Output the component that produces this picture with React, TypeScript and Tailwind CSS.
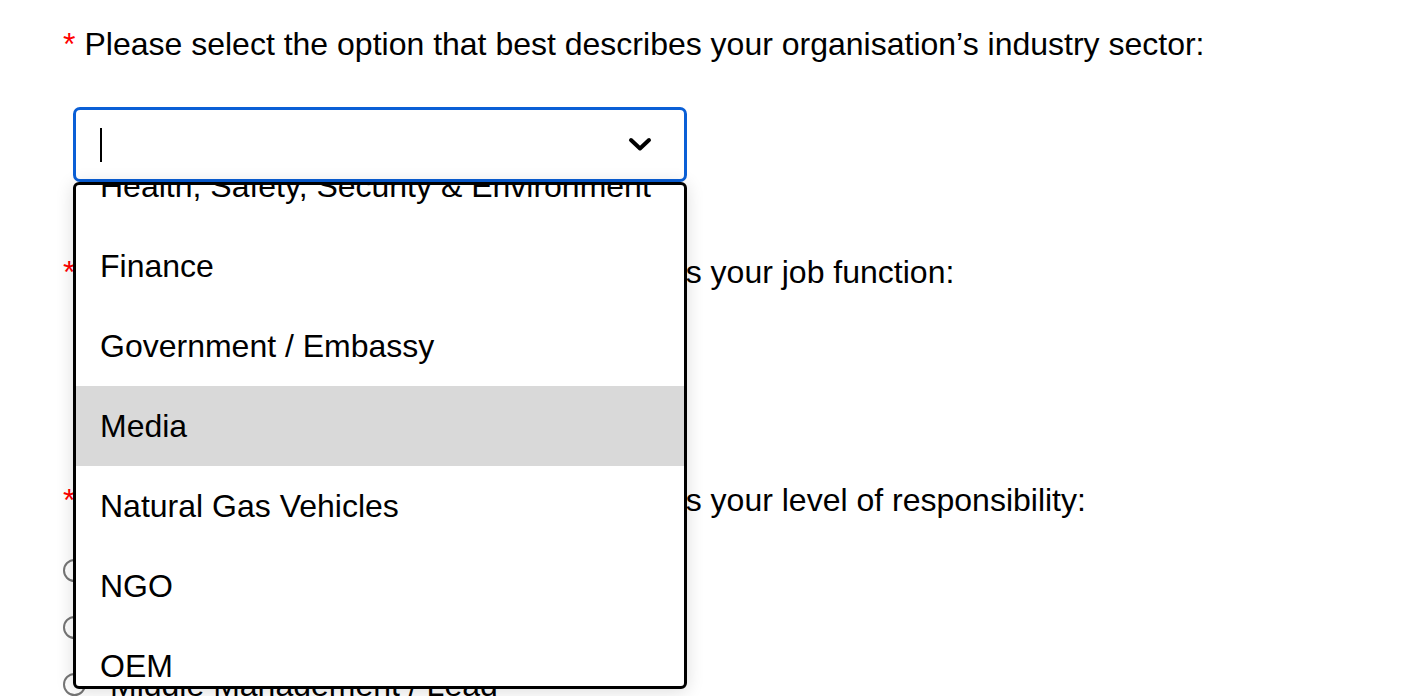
const sectors = [
  "Health, Safety, Security & Environment",
  "Finance",
  "Government / Embassy",
  "Media",
  "Natural Gas Vehicles",
  "NGO",
  "OEM",
  "Oil & Gas",
];

const levels = ["Senior Management / Director", "Manager", "Middle Management / Lead"];

const Chevron = () => (
  <svg width="24" height="15" viewBox="0 0 24 15" fill="none">
    <polyline points="3,3 12,11.5 21,3" stroke="#000" strokeWidth="4" strokeLinecap="round" strokeLinejoin="round" />
  </svg>
);

const Question = ({ text }: { text: string }) => (
  <p className="text-[32px] leading-[36px] text-black">
    <span className="text-[#ff0000] mr-[9px]">*</span>
    {text}
  </p>
);

export default function App() {
  return (
    <div className="relative h-[696px] overflow-hidden bg-white pl-[63px] pt-[26px] font-['Liberation_Sans',Arial,sans-serif]">
      <Question text="Please select the option that best describes your organisation’s industry sector:" />

      <div className="relative mt-[45px] ml-[10px] w-[614px]">
        <div className="flex h-[75px] items-center justify-between rounded-[7px] border-[3px] border-[#0a5fd6] pl-[24px] pr-[32px]">
          <span className="h-[34px] w-[2px] bg-black" />
          <Chevron />
        </div>

        <div className="absolute left-0 top-full z-10 h-[507px] w-full overflow-hidden rounded-[6px] border-[3px] border-black bg-white shadow-[0_2px_18px_rgba(0,0,0,0.14)]">
          <ul className="-mt-[39px]">
            {sectors.map((s) => (
              <li
                key={s}
                className={`flex h-[80px] items-center pl-[24px] text-[32px] text-black ${s === "Media" ? "bg-[#d9d9d9]" : ""}`}
              >
                {s}
              </li>
            ))}
          </ul>
        </div>
      </div>

      <div className="mt-[72px]">
        <Question text="Please select the option that best describes your job function:" />
      </div>
      <div className="mt-[45px] ml-[10px] flex h-[75px] w-[614px] items-center justify-end rounded-[7px] border-[2px] border-[#8f8f9d] pr-[32px]">
        <Chevron />
      </div>

      <div className="mt-[72px]">
        <Question text="Please select the option that best describes your level of responsibility:" />
      </div>
      <div className="mt-[24px] flex flex-col">
        {levels.map((l) => (
          <label key={l} className="flex h-[57px] items-center gap-[24px] text-[32px] text-black">
            <span className="h-[23px] w-[23px] shrink-0 rounded-full border-[2px] border-[#767676] bg-white" />
            {l}
          </label>
        ))}
      </div>
    </div>
  );
}
